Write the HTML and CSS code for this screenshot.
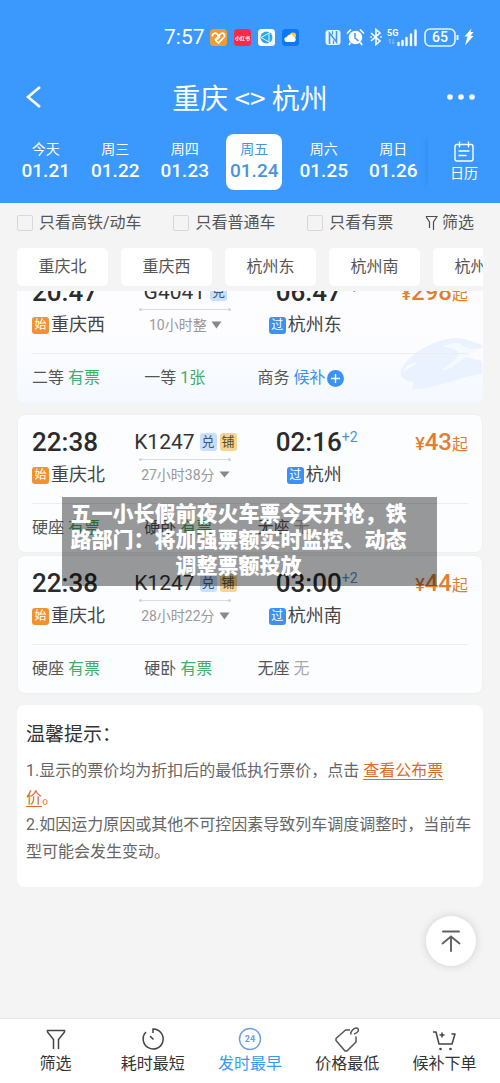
FILE: index.html
```html
<!DOCTYPE html>
<html lang="zh-CN">
<head>
<meta charset="utf-8">
<meta name="viewport" content="width=device-width, initial-scale=1">
<title>重庆 - 杭州</title>
<link rel="stylesheet" href="styles.css">
</head>
<body>
<div class="app">
  <header class="header">
    <div class="status">
      <span class="clock">7:57</span>
      <div class="status-apps">
        <svg width="17" height="17" viewBox="0 0 17 17"><rect width="17" height="17" rx="3.5" fill="#f29a33"/><path d="M2.500 7.500C2 4.500 5.500 3 7.500 5.500L9 7M5 11l5.500-6c2-2 5 0 3.800 2.800L8.500 14 6 11.500l4-4" fill="none" stroke="#fff" stroke-width="1.700"/></svg>
        <svg width="17" height="17" viewBox="0 0 17 17"><rect width="17" height="17" rx="3.500" fill="#f92a48"/><text x="8.500" y="10.500" class="tiny-logo">小红书</text></svg>
        <svg width="17" height="17" viewBox="0 0 17 17"><rect width="17" height="17" rx="3.500" fill="#fff"/><circle cx="8.500" cy="8.500" r="6" fill="#2aa9ee"/><path d="M3 8.500 11 4v9zM11 4l2-1M11 13l1.500 1.500" fill="none" stroke="#d8f6ff"/></svg>
        <svg width="17" height="17" viewBox="0 0 17 17"><rect width="17" height="17" rx="3.500" fill="#0b78f5"/><circle cx="11" cy="6.500" r="3" fill="#ffcf3e"/><path d="M5 13a2.500 2.500 0 0 1-.3-5 3.600 3.600 0 0 1 6.800-.2A2.700 2.700 0 0 1 12 13z" fill="#fff"/></svg>
      </div>
      <div class="status-system">
        <svg width="16" height="17" viewBox="0 0 16 17"><rect x=".5" y="1" width="15" height="15" rx="3" fill="#e9f4ff"/><path d="M4.500 15V4l7 9V2" fill="none" stroke="#3b98fc" stroke-width="1.600"/><path d="M7.500 2v3.500M8.500 11.500V15" stroke="#3b98fc" stroke-width="1.200"/></svg>
        <svg width="19" height="18" viewBox="0 0 19 18"><circle cx="9.500" cy="9.500" r="6.800" fill="#fff"/><path d="M1 5.500 5 1.500M18 5.500l-4-4M4.500 14.500 3 17M14.500 14.500 16 17" stroke="#fff" stroke-width="1.700"/><path d="M9 5v5l3.500 3" fill="none" stroke="#3b98fc" stroke-width="1.500"/></svg>
        <svg width="12" height="18" viewBox="0 0 12 18"><path d="M1 5l9 8-4 3.500v-15L10 5l-9 8" fill="none" stroke="#fff" stroke-width="1.600"/><path d="M.3 9h1.600M10.200 9h1.600" stroke="#fff" stroke-width="1.600"/></svg>
        <svg width="32" height="19" viewBox="0 0 32 19"><text x="0" y="8" class="net-label">5G</text><path d="M3 11v5M1.500 12.500 3 11M6 11v5l1.500-1.500" fill="none" stroke="#8fc4ff"/><path d="M11.500 15v2M15.500 13v4M19.500 10v7M24 6.500V17M28.500 2.500V17" stroke="#fff" stroke-width="2.400" stroke-linecap="round"/></svg>
        <svg width="35" height="19" viewBox="0 0 35 19"><rect x="1" y="1" width="30" height="17" rx="5" fill="none" stroke="#e8f4ff" stroke-width="1.600"/><path d="M33.500 7v5" stroke="#e8f4ff" stroke-width="2"/><text x="16" y="14" class="battery-label">65</text></svg>
        <svg width="10" height="18" viewBox="0 0 10 18"><path d="M7.500.5.5 8.500h3L1 17.500l8.500-9.500h-3L9.500 4h-3z" fill="#fff"/></svg>
      </div>
    </div>
    <div class="titlebar">
      <button class="icon-button" aria-label="返回"><svg width="20" height="24" viewBox="0 0 20 24"><path d="M18 2 6 12l12 10" fill="none" stroke="#fff" stroke-width="2.600"/></svg></button>
      <h1 class="title">重庆 &lt;&gt; 杭州</h1>
      <button class="icon-button" aria-label="更多"><svg width="30" height="8" viewBox="0 0 30 8"><g fill="#fff"><circle cx="4" cy="4" r="2.800"/><circle cx="15" cy="4" r="2.800"/><circle cx="26" cy="4" r="2.800"/></g></svg></button>
    </div>
    <div class="datebar">
      <nav class="dates">
        <button class="date"><span class="weekday">今天</span><span class="day">01.21</span></button>
        <button class="date"><span class="weekday">周三</span><span class="day">01.22</span></button>
        <button class="date"><span class="weekday">周四</span><span class="day">01.23</span></button>
        <button class="date date-active"><span class="weekday">周五</span><span class="day">01.24</span></button>
        <button class="date"><span class="weekday">周六</span><span class="day">01.25</span></button>
        <button class="date"><span class="weekday">周日</span><span class="day">01.26</span></button>
      </nav>
      <button class="calendar"><svg width="22" height="22" viewBox="0 0 22 22"><path d="M4 3.500h14a2 2 0 0 1 2 2V18a2 2 0 0 1-2 2H4a2 2 0 0 1-2-2V5.500a2 2 0 0 1 2-2zM6.500 1v5M15.500 1v5M6 10h10M6 14.500h7" fill="none" stroke="#fff" stroke-width="1.400" stroke-linecap="round"/></svg><span>日历</span></button>
    </div>
  </header>

  <div class="filters">
    <label class="filter"><input class="check" type="checkbox">只看高铁/动车</label>
    <label class="filter"><input class="check" type="checkbox">只看普通车</label>
    <label class="filter"><input class="check" type="checkbox">只看有票</label>
    <button class="filter-more"><svg width="13" height="16" viewBox="0 0 13 16"><path d="M1 1.500h11L8.500 7v8M1 1.500 4.500 7v6" fill="none" stroke="#4c4c4c" stroke-width="1.200"/></svg>筛选</button>
  </div>
  <div class="chips">
    <button class="chip">重庆北</button>
    <button class="chip">重庆西</button>
    <button class="chip">杭州东</button>
    <button class="chip">杭州南</button>
    <button class="chip">杭州西</button>
  </div>

  <main class="results">
    <div class="scroll">
      <article class="card card-featured">
        <svg class="card-art" width="82" height="56" viewBox="0 0 82 56"><path d="M1 36C3 18 38 1 55 1c10 0 18 4 27 7v3c-9 0-14 4-20 9 6-1 12 3 20 4v13C62 39 34 53 12 52L14 45C6 44 0 41 1 36z" fill="#e9f2fe"/><path d="M42 10c8-4 14-5 18-3 5 3 11 6 19 6-5 4-14 7-20 12-8 6-13 9-17 8 6-5 17-12 16-17-2-5-10-6-16-6zM3 35c2-6 7-10 15-9" fill="#f5faff"/></svg>
        <div class="trip">
          <div class="stop"><div class="time">20:47</div><div class="station"><span class="tag tag-start">始</span>重庆西</div></div>
          <div class="train"><div class="number">G4041<span class="mark mark-blue">兑</span></div><div class="route"></div><button class="duration">10小时整<svg width="11" height="8" viewBox="0 0 11 8"><path d="M.5.5h10L5.500 7.500z" fill="#888"/></svg></button></div>
          <div class="stop stop-end"><div class="time">06:47<sup class="plus">+1</sup></div><div class="station"><span class="tag tag-pass">过</span>杭州东</div></div>
          <div class="price"><span class="yen">¥</span><span class="amount">298</span><span class="from">起</span></div>
        </div>
        <div class="seats"><div>二等 <span class="ok">有票</span></div><div>一等 <span class="ok">1张</span></div><div class="seat-wait">商务 <a class="wait" href="#">候补<svg width="17" height="17" viewBox="0 0 17 17"><circle cx="8.500" cy="8.500" r="8.500" fill="#3b92f2"/><path d="M4 8.500h9M8.500 4v9" stroke="#fff" stroke-width="1.400"/></svg></a></div></div>
      </article>
      <div class="pair">
        <article class="card">
          <div class="trip">
            <div class="stop"><div class="time">22:38</div><div class="station"><span class="tag tag-start">始</span>重庆北</div></div>
            <div class="train"><div class="number">K1247<span class="mark mark-blue">兑</span><span class="mark mark-gold">铺</span></div><div class="route"></div><button class="duration">27小时38分<svg width="11" height="8" viewBox="0 0 11 8"><path d="M.5.5h10L5.500 6.500z" fill="#888"/></svg></button></div>
            <div class="stop stop-end"><div class="time">02:16<sup class="plus">+2</sup></div><div class="station"><span class="tag tag-pass">过</span>杭州</div></div>
            <div class="price"><span class="yen">¥</span><span class="amount">43</span><span class="from">起</span></div>
          </div>
          <div class="seats"><div>硬座 <span class="ok">有票</span></div><div>硬卧 <span class="ok">有票</span></div><div>无座 <span class="none">无</span></div></div>
        </article>
        <article class="card">
          <div class="trip">
            <div class="stop"><div class="time">22:38</div><div class="station"><span class="tag tag-start">始</span>重庆北</div></div>
            <div class="train"><div class="number">K1247<span class="mark mark-blue">兑</span><span class="mark mark-gold">铺</span></div><div class="route"></div><button class="duration">28小时22分<svg width="11" height="8" viewBox="0 0 11 8"><path d="M.5.5h10L5.500 7.500z" fill="#888"/></svg></button></div>
            <div class="stop stop-end"><div class="time">03:00<sup class="plus">+2</sup></div><div class="station"><span class="tag tag-pass">过</span>杭州南</div></div>
            <div class="price"><span class="yen">¥</span><span class="amount">44</span><span class="from">起</span></div>
          </div>
          <div class="seats"><div>硬座 <span class="ok">有票</span></div><div>硬卧 <span class="ok">有票</span></div><div>无座 <span class="none">无</span></div></div>
        </article>
      </div>
      <section class="tips">
        <h2 class="tips-title">温馨提示：</h2>
        <p class="tips-text">1.显示的票价均为折扣后的最低执行票价，点击 <span class="tips-mark"><a class="tips-link" href="#">查看公布票价</a>。</span></p>
        <p class="tips-text">2.如因运力原因或其他不可控因素导致列车调度调整时，当前车型可能会发生变动。</p>
      </section>
    </div>
    <div class="caption">五一小长假前夜火车票今天开抢，铁路部门：将加强票额实时监控、动态调整票额投放</div>
    <button class="to-top" aria-label="回到顶部"><svg width="20" height="24" viewBox="0 0 20 24"><path d="M2 2.500h16M10 22V8M1.500 14.500 10 7.500l8.500 7" fill="none" stroke="#606060" stroke-width="1.900" stroke-linecap="round"/></svg></button>
  </main>

  <nav class="tabs">
    <button class="tab"><svg width="26" height="26" viewBox="0 0 26 26"><path d="M15.500 23V13.500L21.500 6V4.500h-17V6l6 7.500V23" fill="none" stroke="#444" stroke-width="1.500"/></svg>筛选</button>
    <button class="tab"><svg width="26" height="26" viewBox="0 0 26 26"><path d="M13 7V3a10 10 0 1 1-7 3M10 10l3.500 3.500" fill="none" stroke="#444" stroke-width="1.500"/></svg>耗时最短</button>
    <button class="tab tab-active"><svg width="26" height="26" viewBox="0 0 26 26"><circle cx="13" cy="13" r="10.500" fill="none" stroke="#6b9de8" stroke-width="1.400"/><text x="13" y="16" class="hour-label">24</text></svg>发时最早</button>
    <button class="tab"><svg width="28" height="26" viewBox="0 0 28 26"><path d="M17 4h-4.500L3 12.500v2L12 25h2l9-9v-5.500M18 8.500c-1-2 2.500-7 5.500-6.500 3.500 1 2 5-2.500 6" fill="none" stroke="#555" stroke-width="1.500" stroke-linejoin="round"/></svg>价格最低</button>
    <button class="tab"><svg width="26" height="26" viewBox="0 0 26 26"><path d="M2 6h3l3 12h13l3-10h-3.500M8.500 9h5M11 6.500v5" fill="none" stroke="#444" stroke-width="1.500" stroke-linejoin="round"/><circle cx="9.500" cy="23" r="1.300" fill="#444"/><circle cx="19.500" cy="23" r="1.300" fill="#444"/></svg>候补下单</button>
  </nav>
</div>
</body>
</html>
```
FILE: styles.css
```css
* { box-sizing: border-box; }
body {
  margin: 0;
  background: #f4f4f4;
  color: #555;
  font: 16px/24px Roboto, "Noto Sans CJK SC", sans-serif;
}
button {
  padding: 0;
  border: 0;
  background: none;
  color: inherit;
  font: inherit;
}
svg { display: block; flex: none; }
h1, h2, p { margin: 0; font-weight: 400; }

.app { display: flex; flex-direction: column; min-height: 100vh; }

/* Header */
.header { background: #3b98fc; color: #fff; padding-bottom: 13px; }
.status {
  display: flex;
  align-items: center;
  height: 60px;
  padding: 14px 26px 0 164px;
}
.clock { font-size: 21px; }
.status-apps { display: flex; gap: 7px; margin-left: 5px; }
.status-system { display: flex; align-items: center; gap: 5px; margin-left: auto; }
.tiny-logo { font: 700 5px "Noto Sans CJK SC", sans-serif; fill: #fff; text-anchor: middle; }
.net-label { font: 700 9px Roboto, sans-serif; fill: #fff; }
.battery-label { font: 500 14px Roboto, sans-serif; fill: #fff; text-anchor: middle; }
.hour-label { font: 700 9px Roboto, sans-serif; fill: #6b9de8; text-anchor: middle; }

.titlebar {
  display: flex;
  align-items: center;
  justify-content: space-between;
  height: 74px;
  padding: 0 22px;
}
.icon-button { display: flex; justify-content: center; width: 34px; }
.icon-button:first-child { justify-content: flex-start; }
.title { font: 400 28px/36px "Noto Sans CJK SC", sans-serif; }

.datebar { display: flex; align-items: stretch; height: 56px; padding-left: 11px; }
.dates { flex: 1; display: grid; grid-template-columns: repeat(6, 1fr); justify-items: center; }
.date {
  display: flex;
  flex-direction: column;
  align-items: center;
  width: 56px;
  height: 56px;
  padding-top: 5px;
  border-radius: 8px;
}
.date-active { background: #fff; color: #4b93dc; }
.weekday { font-size: 14px; line-height: 20px; }
.day { font-size: 19px; line-height: 24px; font-weight: 500; }
.calendar {
  display: flex;
  flex-direction: column;
  align-items: center;
  width: 72px;
  padding-top: 7px;
  box-shadow: -5px 0 5px -5px #2f86e8;
  font-size: 14px;
  line-height: 20px;
}

/* Filters */
.filters {
  display: flex;
  align-items: center;
  justify-content: space-between;
  height: 40px;
  padding: 0 26px 0 17px;
}
.filter { display: flex; align-items: center; gap: 6px; }
.check {
  appearance: none;
  width: 16px;
  height: 16px;
  margin: 0;
  border: 1px solid #d8d8d8;
  border-radius: 2px;
}
.filter-more { display: flex; align-items: center; gap: 4px; }
.chips { display: flex; gap: 13px; margin: 5px 17px 0; overflow: hidden; }
.chip { flex: none; width: 91px; height: 38px; border-radius: 5px; background: #fff; }

/* Results */
.results { position: relative; flex: 1; margin-top: 5px; padding: 0 17px; overflow: hidden; }
.scroll { margin-top: -27px; }
.card {
  position: relative;
  padding: 12px 14px 0;
  border: 1px solid #f0f0f1;
  border-radius: 8px;
  background: #fcfdff;
}
.card-featured {
  border-color: transparent;
  background: linear-gradient(#fdfdff 50%, #f4f9ff) border-box;
}
.card-art { position: absolute; right: 0; bottom: 9px; }
.pair { display: grid; gap: 2px; margin-top: 11px; }
.trip {
  position: relative;
  display: grid;
  grid-template-columns: 102fr 102fr 105fr 126fr;
  padding-bottom: 15px;
  border-bottom: 1px solid #ebedf0;
}
.stop, .train { display: flex; flex-direction: column; }
.stop { gap: 5px; }
.stop-end { align-items: flex-end; }
.train { align-items: center; }
.time {
  position: relative;
  height: 30px;
  color: #2b2b2b;
  font-size: 26px;
  line-height: 30px;
  font-weight: 500;
}
.plus {
  position: absolute;
  left: 100%;
  top: 0;
  color: #4b93dc;
  font-size: 14px;
  line-height: 20px;
  font-weight: 400;
}
.station { display: flex; align-items: center; gap: 2px; font-size: 18px; line-height: 26px; color: #444; }
.tag { width: 17px; border-radius: 3px; color: #fff; font-size: 12px; line-height: 17px; text-align: center; }
.tag-start { background: #f0922f; }
.tag-pass { background: #3b92f2; }
.number { display: flex; align-items: center; height: 30px; color: #333; font-size: 21px; white-space: nowrap; }
.mark { width: 17px; margin-left: 3px; border-radius: 3px; font-size: 13px; line-height: 18px; text-align: center; }
.mark:first-child { margin-left: 5px; }
.mark-blue { background: #c8e0fd; color: #3f5878; }
.mark-gold { background: #f6d491; color: #594a2c; }
.route {
  position: relative;
  width: 92px;
  height: 1px;
  margin: 2px 0;
  background: #dcdcdc;
}
.route::before, .route::after {
  content: "";
  position: absolute;
  top: -1px;
  width: 3px;
  height: 3px;
  border-radius: 2px;
  background: #d4d4d4;
}
.route::before { left: 0; }
.route::after { right: 0; }
.duration { display: flex; align-items: center; gap: 4px; color: #999; font-size: 14px; line-height: 26px; white-space: nowrap; }
.price { height: 30px; color: #e27e31; line-height: 30px; text-align: right; }
.yen { font-size: 18px; font-weight: 500; }
.amount { font-size: 24px; font-weight: 500; }
.from { font-size: 16px; }
.seats {
  position: relative;
  display: grid;
  grid-template-columns: 112fr 113fr 210fr;
  line-height: 48px;
}
.seat-wait { display: flex; gap: 4px; }
.wait { display: flex; align-items: center; gap: 1px; color: #3b92f2; text-decoration: none; }
.ok { color: #3fae68; }
.none { color: #aaa; }

.tips { margin-top: 11px; padding: 16px 10px 22px 9px; border-radius: 8px; background: #fff; }
.tips-title { margin-bottom: 8px; color: #333; font-size: 19px; line-height: 28px; }
.tips-text { color: #666; line-height: 27px; }
.tips-mark, .tips-link { color: #dc6a2c; }
.tips-link { text-underline-offset: 3px; }

.caption {
  position: absolute;
  top: 206px;
  left: 62px;
  right: 63px;
  padding: 4px 30px 7px 8px;
  background: rgba(0, 0, 0, .4);
  color: #fff;
  font-size: 21px;
  line-height: 26px;
  font-weight: 900;
  text-align: center;
}
.to-top {
  position: absolute;
  right: 24px;
  bottom: 52px;
  display: flex;
  align-items: center;
  justify-content: center;
  width: 50px;
  height: 50px;
  border-radius: 50%;
  background: #fff;
  box-shadow: 0 0 10px rgba(0, 0, 0, .15);
}

/* Bottom tabs */
.tabs {
  display: grid;
  grid-template-columns: repeat(5, 1fr);
  height: 65px;
  padding: 7px 7px 0;
  border-top: 1px solid #e8e8e8;
  background: #fff;
  color: #333;
}
.tab { display: flex; flex-direction: column; align-items: center; }
.tab-active { color: #3d98ef; }
```
